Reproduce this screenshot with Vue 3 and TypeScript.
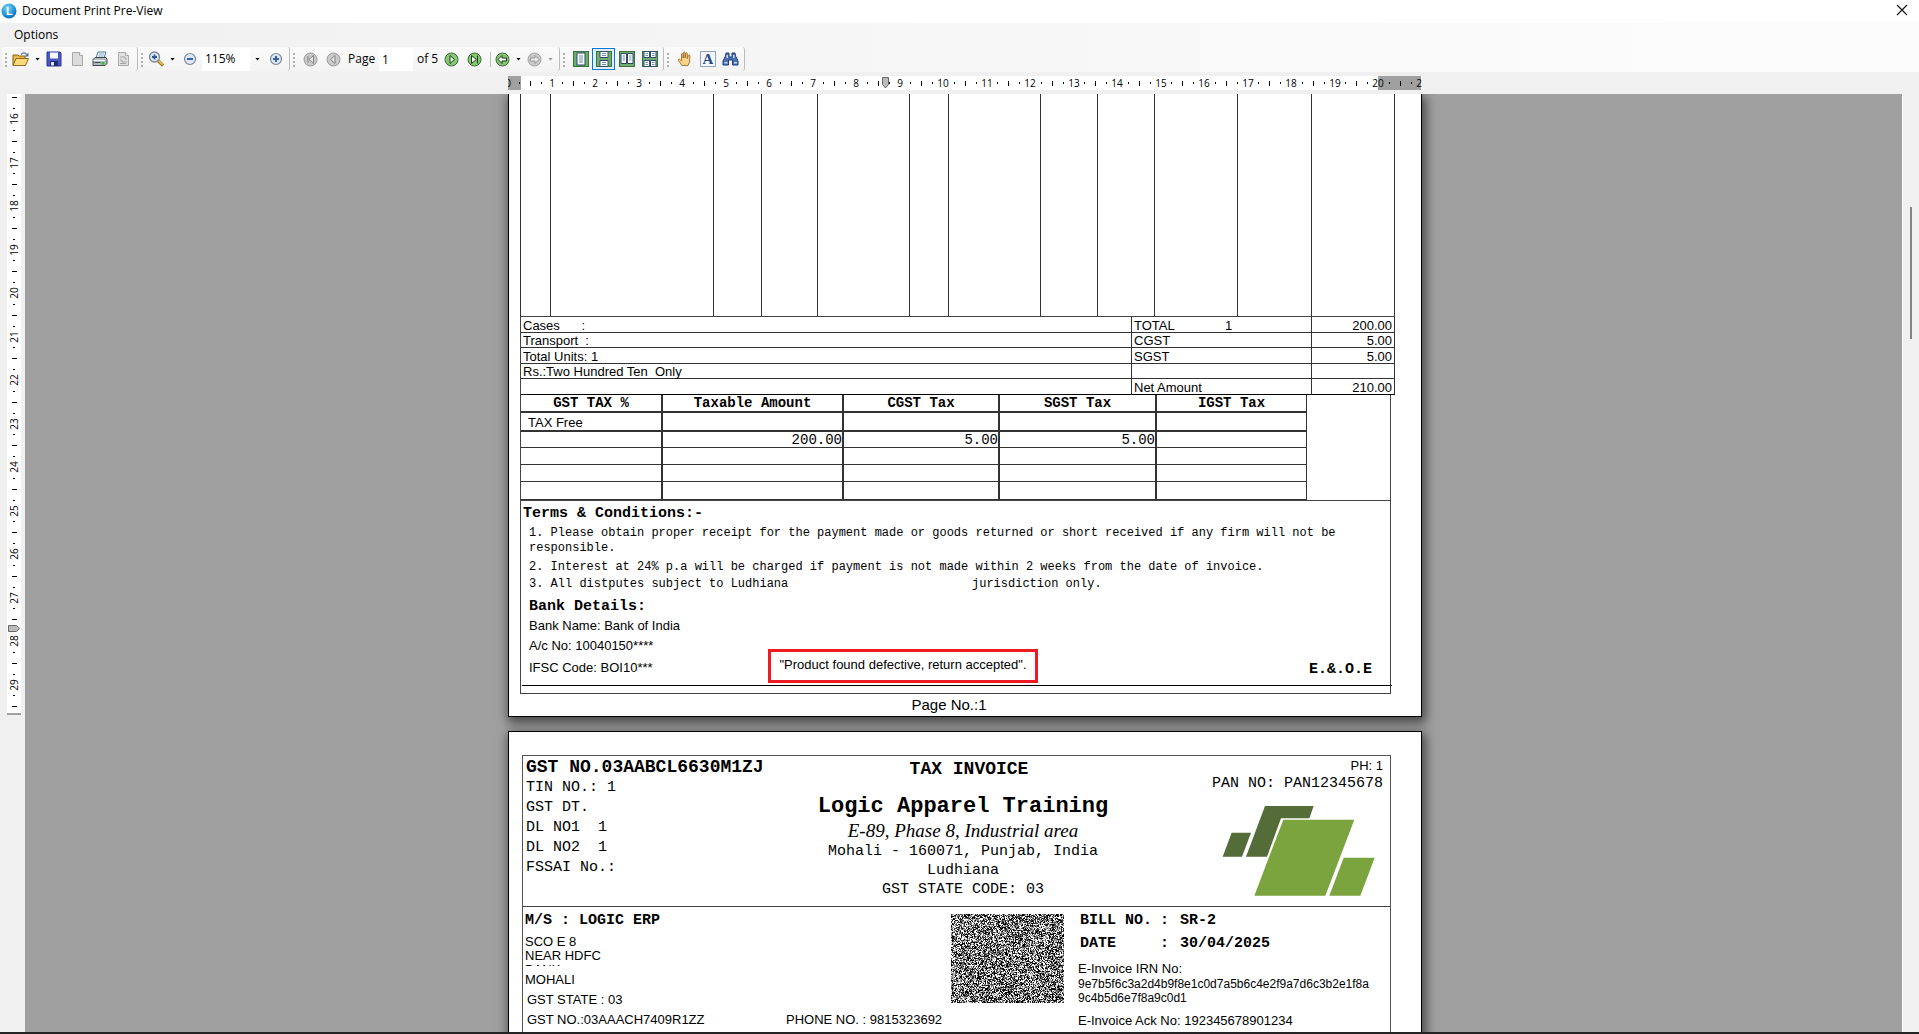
<script setup lang="ts">
interface Tick { at: number; size: number }
interface Mark { at: number; label: string }

const UNIT = 43.5

function buildTicks(from: number, to: number, origin: number): Tick[] {
  const out: Tick[] = []
  for (let q = from * 4; q <= to * 4; q++) {
    if (q % 4 !== 0) out.push({ at: Math.round(origin + (q / 4) * UNIT), size: q % 2 === 0 ? 5 : 2 })
  }
  return out
}
function buildMarks(from: number, to: number, origin: number): Mark[] {
  const out: Mark[] = []
  for (let n = from; n <= to; n++) out.push({ at: Math.round(origin + n * UNIT), label: String(n) })
  return out
}

const hTicks = buildTicks(0, 21, 0)
const hMarks = buildMarks(0, 21, 0)
const vOrigin = 25 - 16 * UNIT
const vTicks = buildTicks(15.5, 29.5, vOrigin)
const vMarks = buildMarks(16, 29, vOrigin)

const taxHeads = ['GST TAX %', 'Taxable Amount', 'CGST Tax', 'SGST Tax', 'IGST Tax']
const taxRows = [
  ['TAX Free', '', '', '', ''],
  ['', '200.00', '5.00', '5.00', ''],
  ['', '', '', '', ''],
  ['', '', '', '', ''],
  ['', '', '', '', ''],
]
const summary = [
  { left: 'Cases      :', label: 'TOTAL', units: '1', value: '200.00' },
  { left: 'Transport  :', label: 'CGST', units: '', value: '5.00' },
  { left: 'Total Units: 1', label: 'SGST', units: '', value: '5.00' },
  { left: 'Rs.:Two Hundred Ten  Only', label: '', units: '', value: '' },
  { left: '', label: 'Net Amount', units: '', value: '210.00' },
]

const codeW = 113
const codeH = 89
const codeShades = ['#000', '#3c3c3c', '#777', '#b4b4b4']
const codePaths: string[] = codeShades.map(() => '')
let seed = 20250430
for (let y = 0; y < codeH; y++) {
  for (let x = 0; x < codeW; x++) {
    seed = (Math.imul(seed, 1664525) + 1013904223) >>> 0
    const r = seed / 4294967296
    const shade = r < 0.24 ? 0 : r < 0.42 ? 1 : r < 0.58 ? 2 : r < 0.76 ? 3 : -1
    if (shade >= 0) codePaths[shade] += `M${x} ${y}h1v1h-1z`
  }
}
</script>

<template>
  <div class="window">
    <header class="titlebar">
      <svg class="app-icon" width="16" height="16" viewBox="0 0 16 16">
        <defs>
          <radialGradient id="orb" cx=".4" cy=".3" r=".8">
            <stop offset="0" stop-color="#7fd4f5" /><stop offset=".6" stop-color="#1f93d6" /><stop offset="1" stop-color="#0a5fa8" />
          </radialGradient>
        </defs>
        <circle cx="8" cy="8" r="7.5" fill="url(#orb)" />
        <text x="5" y="12" font-size="11" font-weight="700" fill="#fff" font-family="Liberation Sans, sans-serif">L</text>
      </svg>
      <h1>Document Print Pre-View</h1>
      <button class="close" aria-label="Close">
        <svg width="12" height="12" viewBox="0 0 12 12"><path d="M1 1l10 10M11 1L1 11" stroke="#111" stroke-width="1.2" /></svg>
      </button>
    </header>

    <div class="bars">
      <nav class="menubar"><button class="menu">Options</button></nav>
      <div class="toolbar">
        <div class="group">
          <i class="grip"></i>
          <button class="tool split" aria-label="Open">
            <svg width="17" height="16" viewBox="0 0 17 16">
              <path d="M1 14V4h5l1 1h6v3" fill="#e9b94f" stroke="#8a6414" />
              <path d="M1 14.5L4 7.500h12.500L13.500 14.500z" fill="#fbd97b" stroke="#8f6a1c" />
              <path d="M9 3.500c2-2.500 4.500-2 5.500 0" fill="none" stroke="#49719c" stroke-width="1.300" /><path d="M16.500 1.500v4h-4z" fill="#49719c" />
            </svg><i class="caret"></i>
          </button>
          <button class="tool" aria-label="Save">
            <svg width="16" height="16" viewBox="0 0 16 16">
              <path d="M1 1h13l1 1v13H1z" fill="#4c57c4" stroke="#2c3590" />
              <path d="M4 1.500h8v6H4z" fill="#f4f6ff" /><path d="M4 10h8v5H4z" fill="#23296f" /><path d="M5 11h3v3.500H5z" fill="#dfe3fa" />
            </svg>
          </button>
          <button class="tool" aria-label="Copy page">
            <svg width="16" height="16" viewBox="0 0 16 16"><path d="M3.500 1.500h7l3 3v10h-10z" fill="#dcdcdc" stroke="#a8a8a8" /><path d="M10.500 1.500v3h3" fill="#fff" stroke="#a8a8a8" /></svg>
          </button>
          <button class="tool" aria-label="Print">
            <svg width="16" height="16" viewBox="0 0 16 16">
              <path d="M4 7L6 1h8l-2 6z" fill="#fff" stroke="#4b78a4" /><path d="M7 3h5M6.500 5h5" stroke="#7aa2c8" />
              <path d="M1 8.500L3 6.500h11l1 2v4l-2 2H1z" fill="#b4bac4" stroke="#3f464f" /><path d="M1.500 9.500h11" stroke="#f4f4f4" />
              <path d="M2.500 11.500h6" stroke="#444" /><path d="M9.500 11h3v2.500h-3z" fill="#2bc42b" />
            </svg>
          </button>
          <button class="tool" aria-label="Page setup">
            <svg width="16" height="16" viewBox="0 0 16 16"><path d="M3.500 1.500h7l3 3v10h-10z" fill="#e2e2e2" stroke="#a8a8a8" /><path d="M10.500 1.500v3h3" fill="#fff" stroke="#a8a8a8" /><path d="M5 6h5v2h2M12 11H7V9H5M5 12.500h6" fill="none" stroke="#a4a4a4" /></svg>
          </button>
        </div>

        <div class="group">
          <i class="grip"></i>
          <button class="tool split" aria-label="Zoom tool">
            <svg width="16" height="16" viewBox="0 0 16 16">
              <path d="M10 9.500l5 5" stroke="#a87a1e" stroke-width="3.200" /><path d="M10.500 9.500l4 4" stroke="#f1c761" stroke-width="1.400" />
              <circle cx="6.500" cy="6" r="5" fill="#dce8f5" stroke="#7b8797" stroke-width="1.300" /><path d="M4 6h5M6.500 3.500v5" stroke="#31558e" stroke-width="1.800" />
            </svg><i class="caret"></i>
          </button>
          <button class="tool" aria-label="Zoom out">
            <svg width="14" height="14" viewBox="0 0 14 14"><circle cx="7" cy="7" r="5.500" fill="#dbe7f6" stroke="#7d8794" stroke-width="1.200" /><path d="M4 7h6" stroke="#3a5f9c" stroke-width="2" /></svg>
          </button>
          <span class="combo">
            <select aria-label="Zoom level"><option>115%</option></select>
            <i class="caret"></i>
          </span>
          <button class="tool" aria-label="Zoom in">
            <svg width="14" height="14" viewBox="0 0 14 14"><circle cx="7" cy="7" r="5.500" fill="#dbe7f6" stroke="#7d8794" stroke-width="1.200" /><path d="M4 7h6M7 4v6" stroke="#3a5f9c" stroke-width="2" /></svg>
          </button>
        </div>

        <div class="group pager">
          <i class="grip"></i>
          <button class="tool" aria-label="First page">
            <svg width="15" height="15" viewBox="0 0 15 15"><circle cx="7.500" cy="7.500" r="6.500" fill="#cacaca" stroke="#9a9a9a" /><path d="M5 4v7M10.500 3.500v8l-4.500-4z" fill="#e4e4e4" stroke="#838383" /></svg>
          </button>
          <button class="tool" aria-label="Previous page">
            <svg width="15" height="15" viewBox="0 0 15 15"><circle cx="7.500" cy="7.500" r="6.500" fill="#cacaca" stroke="#9a9a9a" /><path d="M9 3.500v8l-4.500-4z" fill="#e4e4e4" stroke="#838383" /></svg>
          </button>
          <label class="caption" for="page-no">Page</label>
          <input id="page-no" value="1" />
          <span class="total">of 5</span>
          <button class="tool" aria-label="Next page">
            <svg width="15" height="15" viewBox="0 0 15 15"><circle cx="7.500" cy="7.500" r="6.500" fill="#86c776" stroke="#3d6b36" /><path d="M6 3.500v8l4.500-4z" fill="#e8f8e2" stroke="#1d3d18" /></svg>
          </button>
          <button class="tool" aria-label="Last page">
            <svg width="15" height="15" viewBox="0 0 15 15"><circle cx="7.500" cy="7.500" r="6.500" fill="#86c776" stroke="#3d6b36" /><path d="M10.500 3.500v8M4.500 3.500v8l5-4z" fill="#e8f8e2" stroke="#1d3d18" /></svg>
          </button>
          <i class="sep"></i>
          <button class="tool split" aria-label="Back">
            <svg width="15" height="15" viewBox="0 0 15 15"><circle cx="7.500" cy="7.500" r="6.500" fill="#86c776" stroke="#3d6b36" /><path d="M3 7.500l4-4v2.500h4.500v3H7v2.500z" fill="#f4fbf1" stroke="#1d3d18" /></svg>
            <i class="caret"></i>
          </button>
          <button class="tool split" aria-label="Forward">
            <svg width="15" height="15" viewBox="0 0 15 15"><circle cx="7.500" cy="7.500" r="6.500" fill="#cacaca" stroke="#a2a2a2" /><path d="M12 7.500l-4-4v2.500H3.500v3H8v2.500z" fill="#ececec" stroke="#939393" /></svg>
            <i class="caret dim"></i>
          </button>
        </div>

        <div class="group">
          <i class="grip"></i>
          <button class="tool" aria-label="Single page">
            <svg width="16" height="16" viewBox="0 0 16 16"><rect x=".5" y=".5" width="15" height="15" fill="#6fae70" stroke="#3b7040" /><rect x="4" y="2" width="8" height="12" fill="#fff" stroke="#2a4a66" /><path d="M6 5h4M6 7h4M6 9h4M6 11h4" stroke="#6b8db5" /></svg>
          </button>
          <button class="tool on" aria-label="Continuous">
            <svg width="16" height="16" viewBox="0 0 16 16"><rect x=".5" y=".5" width="15" height="15" fill="#6fae70" stroke="#3b7040" /><path d="M4 .5h8v6H4zM4 9.500h8v6H4z" fill="#fff" stroke="#2a4a66" /><path d="M6 2.500h4M6 4.500h4M6 11.500h4M6 13.500h4" stroke="#6b8db5" /></svg>
          </button>
          <button class="tool" aria-label="Facing pages">
            <svg width="16" height="16" viewBox="0 0 16 16"><rect x=".5" y=".5" width="15" height="15" fill="#6fae70" stroke="#3b7040" /><path d="M2 2.500h5.500v10H2zM8.500 2.500H14v10H8.500z" fill="#fff" stroke="#2a4a66" /><path d="M3.500 5h2.500M3.500 7h2.500M3.500 9h2.500M10 5h2.500M10 7h2.500M10 9h2.500" stroke="#6b8db5" /></svg>
          </button>
          <button class="tool" aria-label="Continuous facing">
            <svg width="16" height="16" viewBox="0 0 16 16"><rect x=".5" y=".5" width="15" height="15" fill="#6fae70" stroke="#3b7040" /><path d="M2 .5h5.500v6H2zM8.500 .5H14v6H8.500zM2 9.500h5.500v6H2zM8.500 9.500H14v6H8.500z" fill="#fff" stroke="#2a4a66" /><path d="M3.500 2.500h2.500M3.500 4.500h2.500M10 2.500h2.500M10 4.500h2.500M3.500 11.500h2.500M3.500 13.500h2.500M10 11.500h2.500M10 13.500h2.500" stroke="#6b8db5" /></svg>
          </button>
        </div>

        <div class="group">
          <i class="grip"></i>
          <button class="tool" aria-label="Hand">
            <svg width="16" height="16" viewBox="0 0 16 16"><path d="M5 14.500L1.500 9.500c-.8-1.200.6-2 1.500-1L4.500 10V3.500c0-1.300 1.600-1.300 1.700 0V7l.2-5c0-1.300 1.700-1.300 1.700 0v5l.6-4.500c.2-1.200 1.600-1 1.600.2V7.500l1-3c.4-1.100 1.800-.7 1.600.5L12.500 11l-1.500 3.500z" fill="#fbd48a" stroke="#9a6a28" stroke-width=".9" /></svg>
          </button>
          <button class="tool" aria-label="Select text">
            <svg width="16" height="16" viewBox="0 0 16 16"><rect x=".5" y=".5" width="15" height="15" fill="#f6f8fc" stroke="#2d4f8c" stroke-dasharray="1 1" /><text x="8" y="13" text-anchor="middle" font-size="15" font-weight="700" fill="#24498b" font-family="Liberation Serif, serif">A</text></svg>
          </button>
          <button class="tool" aria-label="Find">
            <svg width="17" height="16" viewBox="0 0 17 16"><path d="M4 2h3v4h3V2h3l.5 3 2.500 5v4h-5.500v-5h-4v5H1v-4l2.500-5z" fill="#4a6fb4" stroke="#223f7c" /><path d="M2.500 11h3v1.500h-3zM12 11h3v1.500h-3zM4.500 4h1.500v3H4.500zM11 4h1.500v3H11z" fill="#cddcf5" /></svg>
          </button>
        </div>
      </div>
    </div>

    <div class="hruler">
      <svg width="914" height="14" viewBox="0 0 914 14">
        <rect width="914" height="14" fill="#fff" />
        <rect width="13" height="14" fill="#a0a0a0" /><rect x="870" width="43" height="14" fill="#a0a0a0" />
        <rect v-for="t in hTicks" :key="t.at" :x="t.at" :y="t.size === 5 ? 5 : 6" width="1" :height="t.size" fill="#000" />
        <text v-for="m in hMarks" :key="m.label" :x="m.at" y="11" text-anchor="middle">{{ m.label }}</text>
        <path d="M374.500 1.500h6v7l-3 3.500-3-3.500z" fill="#bbb" stroke="#666" />
      </svg>
    </div>

    <main class="work">
      <aside class="vruler">
        <svg width="14" height="621" viewBox="0 0 14 621">
          <rect width="14" height="621" fill="#fff" /><rect y="619" width="14" height="2" fill="#a0a0a0" />
          <rect v-for="t in vTicks" :key="t.at" :x="t.size === 5 ? 5 : 6" :y="t.at" :width="t.size" height="1" fill="#000" />
          <text v-for="m in vMarks" :key="m.label" :transform="`translate(11 ${m.at}) rotate(-90)`" text-anchor="middle">{{ m.label }}</text>
          <path d="M1.500 531.500v6h8l3-3-3-3z" fill="#bbb" stroke="#666" />
        </svg>
      </aside>

      <div class="canvas">
        <article class="sheet">
          <div class="items"><span v-for="n in 12" :key="n"></span></div>
          <table class="summary">
            <colgroup><col class="c1" /><col class="c2" /><col class="c3" /></colgroup>
            <tbody>
              <tr v-for="(r, i) in summary" :key="i">
                <td>{{ r.left }}</td>
                <td><span class="lbl">{{ r.label }}</span>{{ r.units }}</td>
                <td class="num">{{ r.value }}</td>
              </tr>
            </tbody>
          </table>
          <div class="body">
            <div class="taxwrap">
              <table class="tax">
                <colgroup><col class="t1" /><col class="t2" /><col class="t3" /><col class="t4" /><col class="t5" /></colgroup>
                <thead><tr><th v-for="h in taxHeads" :key="h">{{ h }}</th></tr></thead>
                <tbody>
                  <tr v-for="(r, i) in taxRows" :key="i"><td v-for="(c, j) in r" :key="j">{{ c }}</td></tr>
                </tbody>
              </table>
            </div>
            <h2 class="terms-title">Terms &amp; Conditions:-</h2>
            <div class="terms">
              <p class="first">1. Please obtain proper receipt for the payment made or goods returned or short received if any firm will not be<br />responsible.</p>
              <p>2. Interest at 24% p.a will be charged if payment is not made within 2 weeks from the date of invoice.</p>
              <p class="last"><span class="place">3. All distputes subject to Ludhiana</span>jurisdiction only.</p>
            </div>
            <div class="closing">
              <div class="bank">
                <h2>Bank Details:</h2>
                <p>Bank Name: Bank of India</p>
                <p>A/c No: 10040150****</p>
                <p class="ifsc">IFSC Code: BOI10***</p>
              </div>
              <p class="note">"Product found defective, return accepted".</p>
              <strong class="eoe">E.&amp;.O.E</strong>
            </div>
            <div class="rule"></div>
          </div>
          <p class="pageno">Page No.:1</p>
        </article>

        <article class="sheet next">
          <div class="invoice">
            <div class="head">
              <div class="ids">
                <strong>GST NO.03AABCL6630M1ZJ</strong>
                <p>TIN NO.: 1</p>
                <p>GST DT.</p>
                <p>DL NO1&nbsp; 1</p>
                <p>DL NO2&nbsp; 1</p>
                <p>FSSAI No.:</p>
              </div>
              <div class="firm">
                <p class="kind">TAX INVOICE</p>
                <h2>Logic Apparel Training</h2>
                <p class="street">E-89, Phase 8, Industrial area</p>
                <p>Mohali - 160071, Punjab, India</p>
                <p>Ludhiana</p>
                <p>GST STATE CODE: 03</p>
              </div>
              <div class="brand">
                <p class="ph">PH: 1</p>
                <p>PAN NO: PAN12345678</p>
                <svg width="154" height="92" viewBox="845 225 462 276">
                  <path d="M874 308h58l-27 72h-58zM974 228h146l-13 37h-85l-42 115h-63z" fill="#536c38" />
                  <path d="M1029 269h213l-87 228H942zM1210 383h93l-43 114h-93z" fill="#7ba43f" />
                </svg>
              </div>
            </div>
            <div class="parties">
              <div class="buyer">
                <strong>M/S : LOGIC ERP</strong>
                <p class="addr">SCO E 8<br />NEAR HDFC<br />BANK</p>
                <p class="city">MOHALI</p>
                <p class="in">GST STATE : 03</p>
                <p class="in reg"><span>GST NO.:03AAACH7409R1ZZ</span><span>PHONE NO. : 9815323692</span></p>
              </div>
              <svg class="code" :width="codeW" :height="codeH" :viewBox="`0 0 ${codeW} ${codeH}`" shape-rendering="crispEdges">
                <path v-for="(d, i) in codePaths" :key="i" :d="d" :fill="codeShades[i]" />
              </svg>
              <div class="bill">
                <div class="pair"><span>BILL NO.</span><span>:</span><span>SR-2</span></div>
                <div class="pair"><span>DATE</span><span>:</span><span>30/04/2025</span></div>
                <p class="irn">E-Invoice IRN No:</p>
                <p class="hash">9e7b5f6c3a2d4b9f8e1c0d7a5b6c4e2f9a7d6c3b2e1f8a<br />9c4b5d6e7f8a9c0d1</p>
                <p class="ack">E-Invoice Ack No: 192345678901234</p>
              </div>
            </div>
          </div>
        </article>
      </div>
      <div class="scroll"><i></i></div>
    </main>
  </div>
</template>

<style>
html, body { background: #f0f0f0; overflow: hidden; }
</style>

<style scoped>
.window { height: 100vh; box-sizing: border-box; display: flex; flex-direction: column; background: #f0f0f0; border-bottom: 2px solid #242424; overflow: hidden; font: 12px/16px "Open Sans", "Noto Sans", sans-serif; color: #000; }
.window * { box-sizing: border-box; }
p, h1, h2 { margin: 0; font-size: inherit; font-weight: inherit; }
button { border: 0; background: none; padding: 0; font: inherit; color: inherit; }
svg { display: block; flex: none; }

.titlebar { display: flex; align-items: center; height: 23px; background: #fff; padding: 0 11px 1px 1px; }
.titlebar h1 { margin-left: 5px; font-size: 12px; }
.close { margin-left: auto; padding-bottom: 2px; }
.bars { background: linear-gradient(90deg, #f0f0f0 0, #fcfcfc 90%); height: 49px; }
.menubar { height: 24px; padding-left: 14px; }
.menu { height: 24px; }
.toolbar { display: flex; height: 25px; padding-left: 2px; }
.group { display: flex; align-items: center; height: 24px; padding-right: 3px; border-right: 1px solid #bdbdbd; border-radius: 3px; background: linear-gradient(#fbfbfb, #f3f3f3); }
.group + .group { padding-right: 2px; }
.grip { width: 9px; height: 15px; background: radial-gradient(circle at 1px 1px, #b0b0b0 1px, transparent 1px) 3px 1px / 4px 4px repeat-y; flex: none; }
.tool { width: 23px; height: 22px; display: flex; align-items: center; justify-content: center; flex: none; }
.tool.on { border: 1px solid #0078d7; background: #e3f0fb; }
.tool.split { width: 31px; gap: 6px; justify-content: flex-start; padding-left: 1px; }
.pager .tool.split { width: 32px; padding-left: 2px; }
.caret { width: 5px; height: 3px; background: #000; clip-path: polygon(0 0, 100% 0, 50% 100%); flex: none; }
.caret.dim { background: #999; }
.combo { display: flex; align-items: center; width: 62px; margin-left: 1px; }
.combo .caret { margin-left: 5px; }
.combo select { appearance: none; width: 48px; height: 23px; border: 0; border-radius: 0; background: #fff; font: inherit; padding: 0 0 0 3px; color: #000; }
.caption { margin: 0 3px; width: 28px; }
.pager input { width: 34px; height: 23px; border: 0; background: #fff; font: inherit; padding: 0 3px; margin-right: 4px; }
.total { width: 23px; white-space: nowrap; }
.sep { width: 1px; height: 15px; background: #bdbdbd; margin: 0 2px 0 4px; }

.hruler { display: flex; justify-content: center; padding: 4px 17px 4px 28px; height: 22px; }
.hruler text, .vruler text { font: 10px "Open Sans", sans-serif; }
.work { flex: 1; min-height: 0; display: flex; }
.vruler { width: 25px; padding-left: 7px; flex: none; }
.canvas { flex: 1; min-width: 0; background: #a0a0a0; padding-left: 3px; overflow: hidden; display: flex; flex-direction: column; align-items: center; }
.scroll { width: 17px; flex: none; border-left: 1px solid #fff; padding: 113px 0 0 7px; }
.scroll i { display: block; width: 2px; height: 132px; background: #858585; }

.sheet { width: 914px; flex: none; background: #fff; border: 1px solid #000; border-top: 0; padding: 0 11px; box-shadow: 2px 4px 10px 2px rgba(0, 0, 0, .55); font: 13px/15px "Liberation Sans", Arial, sans-serif; }
.sheet.next { margin-top: 14px; border-top: 1px solid #000; padding-top: 23px; position: relative; }
.items { display: grid; grid-template-columns: 30px 163px 48px 56px 92px 39px 92px 57px 57px 83px 74px 83px; width: 875px; height: 222px; border-left: 1px solid #333; }
.items span { border-right: 1px solid #333; }
table { border-collapse: separate; border-spacing: 0; table-layout: fixed; }
td, th { padding: 0; }
.summary { width: 875px; border: 1px solid #444; border-width: 1px 0 0 1px; }
.summary .c1 { width: 611px; } .summary .c2 { width: 180px; } .summary .c3 { width: 83px; }
.summary tr { height: 16px; }
.summary tr:nth-child(even) { height: 15px; }
.summary td { border: 1px solid #333; border-width: 0 1px 1px 0; padding: 2px 0 0 2px; line-height: 12px; white-space: pre; }
.summary tr:last-child td { border-bottom-color: #000; }
.summary .num { text-align: right; padding-right: 2px; }
.lbl { display: inline-block; width: 91px; }
.body { width: 871px; border: 1px solid #444; border-top: 0; }
.taxwrap { border-bottom: 1px solid #444; }
.tax { width: 786px; font-family: "Liberation Mono", "Courier New", monospace; font-size: 14px; }
.t1 { width: 142px; } .t2 { width: 181px; } .t3 { width: 156px; } .t4 { width: 157px; } .t5 { width: 150px; }
.tax th, .tax td { border: 0 solid #333; border-width: 0 2px 1px 0; line-height: 14px; text-align: right; height: 17px; }
.tax th { text-align: center; height: 18px; border-bottom-width: 2px; font-weight: 700; }
.tax tbody tr:first-child td { height: 19px; border-bottom-width: 2px; }
.tax tbody tr:nth-child(2) td { height: 16px; }
.tax tbody tr:last-child td { height: 18px; }
.tax th:last-child, .tax td:last-child { border-right-width: 1px; }
.tax td:first-child { text-align: left; padding: 2px 0 0 7px; font: 13px/13px "Liberation Sans", Arial, sans-serif; }
.terms-title, .bank h2, .eoe, .ids, .firm, .brand p, .buyer strong, .pair { font-family: "Liberation Mono", "Courier New", monospace; font-size: 15px; }
.terms-title { font-weight: 700; line-height: 24px; padding: 1px 0 0 2px; }
.terms { font: 12px/18px "Liberation Mono", "Courier New", monospace; padding-left: 8px; white-space: nowrap; }
.terms .first { line-height: 15px; margin-bottom: 2px; }
.terms .last { line-height: 17px; }
.place { display: inline-block; width: 443px; }
.closing { display: flex; align-items: flex-end; height: 90px; }
.bank { width: 247px; padding-left: 8px; line-height: 20px; align-self: flex-start; padding-top: 4px; }
.bank h2 { font-weight: 700; line-height: 19px; }
.bank .ifsc { line-height: 24px; }
.note { width: 270px; height: 34px; border: 3px solid #ed1c24; line-height: 26px; text-align: center; white-space: nowrap; }
.eoe { margin-left: auto; padding: 0 18px 4px 0; line-height: 18px; }
.rule { height: 1px; background: #000; margin: 2px -2px 7px 1px; }
.pageno { font-size: 15px; line-height: 22px; text-align: center; padding-right: 32px; }

.invoice { margin-left: 2px; width: 869px; border: 1px solid #555; border-bottom: 0; min-height: 290px; }
.head { display: grid; grid-template-columns: 290px 300px 1fr; border-bottom: 1px solid #444; height: 151px; }
.ids { padding-left: 3px; line-height: 20px; white-space: nowrap; }
.ids strong { display: block; font-size: 18px; line-height: 22px; }
.firm { text-align: center; line-height: 19px; white-space: nowrap; }
.kind { font-size: 18px; font-weight: 700; line-height: 24px; padding: 1px 0 0 12px; margin-bottom: 14px; }
.firm h2 { font-size: 22px; font-weight: 700; line-height: 24px; margin: 0 -10px; }
.street { font: italic 19px/23px "Liberation Serif", "Times New Roman", serif; }
.brand { display: flex; flex-direction: column; align-items: flex-end; padding-right: 7px; line-height: 17px; padding-top: 1px; }
.brand .ph { font: 13px/18px "Liberation Sans", Arial, sans-serif; }
.brand svg { margin: 13px 7px 0 0; }
.parties { display: flex; align-items: flex-start; white-space: nowrap; }
.buyer { width: 428px; padding: 2px 0 0 2px; line-height: 20px; }
.buyer strong { display: block; line-height: 24px; margin-bottom: 2px; }
.addr { line-height: 14px; height: 31px; overflow: hidden; }
.city { margin-top: 4px; }
.in { padding-left: 2px; }
.reg { display: grid; grid-template-columns: 259px 1fr; }
.code { margin-top: 7px; }
.bill { padding: 2px 0 0 14px; }
.pair { display: grid; grid-template-columns: 80px 20px 1fr; font-weight: 700; line-height: 23px; padding-left: 2px; }
.irn { line-height: 16px; margin-top: 6px; }
.hash { font-size: 12px; line-height: 14px; }
.ack { line-height: 20px; margin-top: 6px; }
</style>
